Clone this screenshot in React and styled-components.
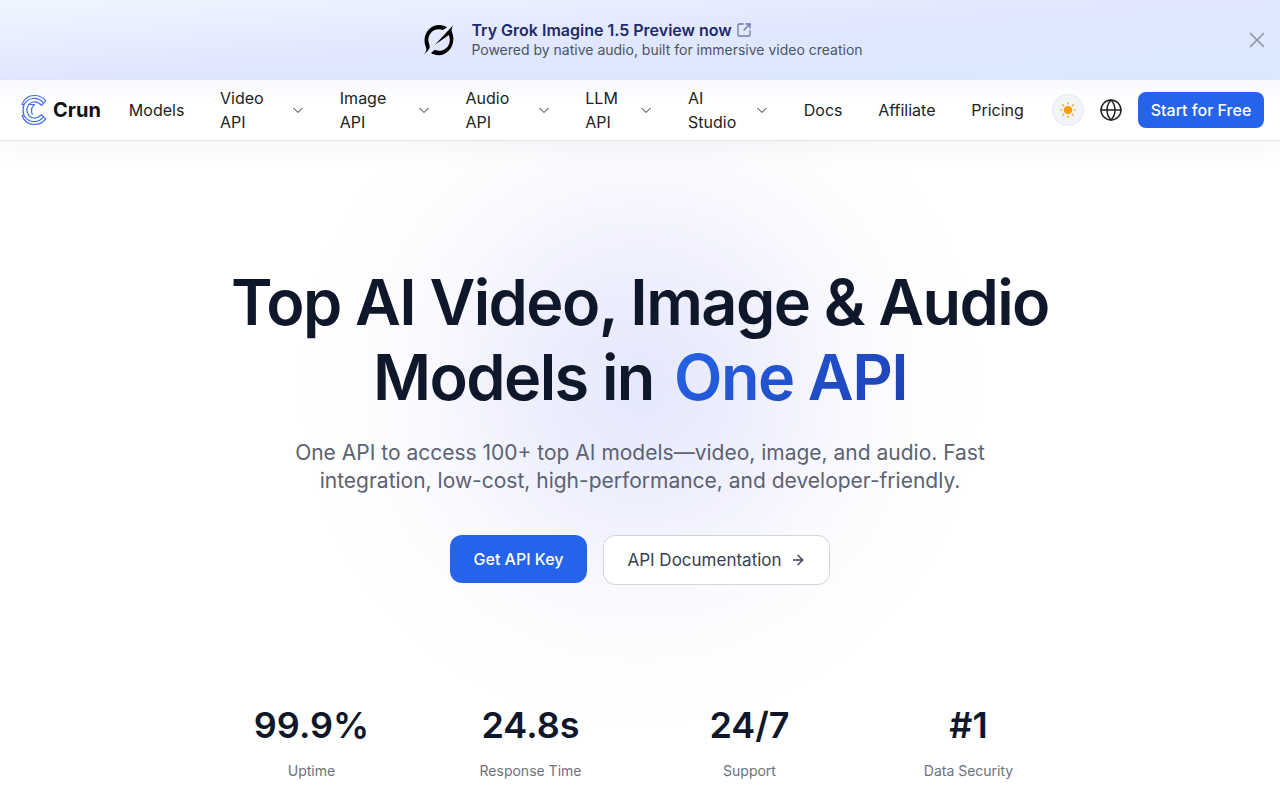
import React, { useState } from 'react';
import styled, { createGlobalStyle } from 'styled-components';
import { ArrowRight, Globe, SquareArrowOutUpRight, X } from 'lucide-react';

const GlobalStyle = createGlobalStyle`
	*, *::before, *::after {
		box-sizing: border-box;
	}
	body {
		margin: 0;
		background: #ffffff;
		color: #0f172a;
		font-family: Inter, sans-serif;
		font-size: 16px;
		line-height: 24px;
	}
	h1, p, dl, dd {
		margin: 0;
	}
	a {
		color: inherit;
		text-decoration: none;
	}
	button {
		padding: 0;
		border: 0;
		background: none;
		color: inherit;
		font: inherit;
		cursor: pointer;
	}
	svg {
		display: block;
		flex: none;
	}
`;

const Page = styled.div`
	min-height: 100vh;
	overflow: hidden;
`;

const Banner = styled.aside`
	display: grid;
	grid-template-columns: 26px 1fr 26px;
	align-items: center;
	height: 80px;
	padding: 0 10px 0 16px;
	background: linear-gradient(to bottom right, #eff6ff 0%, #e0e7ff 50%, #dbeafe 100%);
`;

const BannerLink = styled.a`
	grid-column: 2;
	justify-self: center;
	display: flex;
	align-items: center;
	gap: 16px;
`;

const BannerTitle = styled.span`
	display: flex;
	align-items: center;
	gap: 4px;
	color: #1e2a6b;
	font-weight: 600;
	line-height: 20px;

	svg {
		color: #7479aa;
	}
`;

const BannerText = styled.span`
	display: block;
	color: #4b5563;
	font-size: 14px;
	line-height: 20px;
`;

const CloseButton = styled.button`
	color: #9097a8;
`;

const Header = styled.header`
	position: relative;
	z-index: 1;
	display: flex;
	align-items: center;
	gap: 28px;
	height: 61px;
	padding: 0 16px 0 20px;
	border-bottom: 1px solid #e5e7eb;
	background: linear-gradient(#f8faff, #ffffff 24px);
	box-shadow: 0 8px 24px rgba(15, 23, 42, 0.04);
`;

const Brand = styled.a`
	display: flex;
	align-items: center;
	gap: 5px;
	color: #111111;
	font-size: 20px;
	font-weight: 700;
`;

const Nav = styled.nav`
	flex: 1;
	display: flex;
	align-items: center;
	justify-content: space-between;
	color: #222222;
`;

const MenuButton = styled.button`
	display: flex;
	align-items: center;
	justify-content: space-between;
	width: ${({ $width }) => $width}px;
	text-align: left;

	span {
		width: min-content;
	}
`;

const Actions = styled.div`
	display: flex;
	align-items: center;
	gap: 15px;
	color: #222222;
`;

const ThemeButton = styled.button`
	display: grid;
	place-items: center;
	width: 32px;
	height: 32px;
	border: 1px solid #e5e9f0;
	border-radius: 50%;
	background: #f1f5f9;
`;

const StartLink = styled.a`
	width: 126px;
	border-radius: 8px;
	background: #2563eb;
	color: #ffffff;
	font-weight: 500;
	line-height: 36px;
	text-align: center;
	white-space: nowrap;
`;

const Hero = styled.main`
	display: flex;
	flex-direction: column;
	align-items: center;
	padding: 124px 16px 20px;
	background:
		radial-gradient(circle 230px at 50% 244px, rgba(79, 100, 235, 0.08), rgba(90, 100, 240, 0.06) 35%, rgba(99, 102, 241, 0.02) 75%, transparent),
		radial-gradient(circle 350px at 50% 244px, rgba(79, 100, 235, 0.08), rgba(99, 102, 241, 0.05) 45%, rgba(99, 102, 241, 0.01) 80%, transparent);
	text-align: center;
`;

const Title = styled.h1`
	max-width: 896px;
	font-size: 63px;
	font-weight: 600;
	letter-spacing: -0.025em;
	line-height: 75px;
`;

const Highlight = styled.span`
	margin-left: 6px;
	background: linear-gradient(135deg, #2563eb, #1e40af);
	background-clip: text;
	color: transparent;
`;

const Lead = styled.p`
	max-width: 704px;
	margin-top: 24px;
	color: #5b6272;
	font-size: 21px;
	line-height: 28px;
`;

const Buttons = styled.div`
	display: flex;
	align-items: flex-start;
	gap: 16px;
	margin-top: 40px;
`;

const PrimaryLink = styled.a`
	width: 137px;
	border-radius: 12px;
	background: #2563eb;
	color: #ffffff;
	font-weight: 500;
	line-height: 48px;
`;

const SecondaryLink = styled.a`
	display: flex;
	align-items: center;
	justify-content: center;
	gap: 8px;
	width: 227px;
	height: 50px;
	border: 1px solid #d1d5db;
	border-radius: 12px;
	background: #ffffff;
	color: #374151;
	font-size: 17px;
`;

const Stats = styled.dl`
	display: grid;
	grid-template-columns: repeat(4, 1fr);
	gap: 32px;
	width: 100%;
	max-width: 844px;
	margin-top: 120px;
`;

const Stat = styled.div`
	display: flex;
	flex-direction: column-reverse;
	gap: 16px;

	dt {
		color: #6b7280;
		font-size: 14px;
		line-height: 20px;
	}

	dd {
		font-size: 36px;
		font-weight: 600;
		line-height: 40px;
	}
`;

const NAV_ITEMS = [
	{ label: 'Models' },
	{ label: 'Video API', width: 84 },
	{ label: 'Image API', width: 90 },
	{ label: 'Audio API', width: 84 },
	{ label: 'LLM API', width: 67 },
	{ label: 'AI Studio', width: 80 },
	{ label: 'Docs' },
	{ label: 'Affiliate' },
	{ label: 'Pricing' },
];

const STATS = [
	{ value: '99.9%', label: 'Uptime' },
	{ value: '24.8s', label: 'Response Time' },
	{ value: '24/7', label: 'Support' },
	{ value: '#1', label: 'Data Security' },
];

const GrokLogo = () => (
	<svg width="32" height="32" viewBox="0 0 32 32" fill="#000000" aria-hidden="true">
		<path d="M0.700 30.700C3.300 27.500 4 25.500 2.800 23C-1.500 12.500 5.500 1 16 1C18.800 1 21.500 1.700 24 3.200L20 6.100C10.500 2.300 2.500 11.500 6.300 20.500C7.300 23 6.500 25 4.500 27Z" />
		<path d="M30.700 0.700C28.500 3.800 28.200 6.200 29.300 9C33.200 19.500 26 31.200 15.500 31.200C12.700 31.200 10.200 30.500 8 29.100L11.800 25.800C20.500 29.800 30 21 25.800 11L12 20.700L24.500 7.200Z" />
	</svg>
);

const CrunLogo = () => (
	<svg width="28" height="32" viewBox="0 0 28 32" fill="none" stroke="#3f6ae6" strokeWidth="1.200" strokeLinejoin="round" aria-hidden="true">
		<path d="M2 10.500C4 5 8.500 1.500 14.500 1.500C19 1.500 23 3.500 25.700 6.800L21.500 11.300C17 6.500 10.500 7 8 12C6.500 14.500 6.500 17.500 8 20C10.500 25 17 25.500 21.500 20.700L25.700 25.200C23 28.500 19 30.500 14.500 30.500C8.500 30.500 4 27 2 21.500H4C2.700 17.800 2.700 14.200 4 10.500Z" />
		<path d="M4 10.500C8 3.500 17.500 2 23.300 8.800M4 21.500C8 28.500 17.500 30 23.300 23.200M8.700 10.500H14.500C11 13.500 11 17.500 12.500 20.500" />
	</svg>
);

const ChevronIcon = () => (
	<svg width="12" height="12" viewBox="0 0 12 12" fill="none" stroke="#222222" aria-hidden="true">
		<path d="M1.500 4L6 8.500L10.500 4" />
	</svg>
);

const SunIcon = () => (
	<svg width="18" height="18" viewBox="0 0 18 18" fill="#f59e0b" stroke="#f59e0b" strokeWidth="1.200" strokeLinecap="round" aria-hidden="true">
		<circle cx="9" cy="9" r="3.500" />
		<path d="M9 1.500v1.600M9 14.900v1.600M1.500 9h1.600M14.900 9h1.600M3.700 3.700l1.100 1.100M13.200 13.200l1.100 1.100M3.700 14.300l1.100-1.100M13.200 4.800l1.100-1.100" />
	</svg>
);

export default function App() {
	const [bannerOpen, setBannerOpen] = useState(true);

	return (
		<>
			<GlobalStyle />
			<Page>
				{bannerOpen && (
					<Banner>
						<BannerLink href="#grok-imagine">
							<GrokLogo />
							<div>
								<BannerTitle>
									Try Grok Imagine 1.5 Preview now
									<SquareArrowOutUpRight size={16} />
								</BannerTitle>
								<BannerText>Powered by native audio, built for immersive video creation</BannerText>
							</div>
						</BannerLink>
						<CloseButton aria-label="Close" onClick={() => setBannerOpen(false)}>
							<X size={26} strokeWidth={1.6} />
						</CloseButton>
					</Banner>
				)}

				<Header>
					<Brand href="#home">
						<CrunLogo />
						Crun
					</Brand>
					<Nav>
						{NAV_ITEMS.map(({ label, width }) =>
							width ? (
								<MenuButton key={label} $width={width}>
									<span>{label}</span>
									<ChevronIcon />
								</MenuButton>
							) : (
								<a key={label} href={`#${label.toLowerCase()}`}>
									{label}
								</a>
							),
						)}
					</Nav>
					<Actions>
						<ThemeButton aria-label="Toggle theme">
							<SunIcon />
						</ThemeButton>
						<button aria-label="Language">
							<Globe size={24} strokeWidth={1.5} />
						</button>
						<StartLink href="#start">Start for Free</StartLink>
					</Actions>
				</Header>

				<Hero>
					<Title>
						Top AI Video, Image &amp; Audio
						<br />
						Models in <Highlight>One API</Highlight>
					</Title>
					<Lead>
						One API to access 100+ top AI models—video, image, and audio. Fast integration, low-cost, high-performance,
						and developer-friendly.
					</Lead>
					<Buttons>
						<PrimaryLink href="#key">Get API Key</PrimaryLink>
						<SecondaryLink href="#docs">
							API Documentation
							<ArrowRight size={16} />
						</SecondaryLink>
					</Buttons>
					<Stats>
						{STATS.map(({ value, label }) => (
							<Stat key={label}>
								<dt>{label}</dt>
								<dd>{value}</dd>
							</Stat>
						))}
					</Stats>
				</Hero>
			</Page>
		</>
	);
}
